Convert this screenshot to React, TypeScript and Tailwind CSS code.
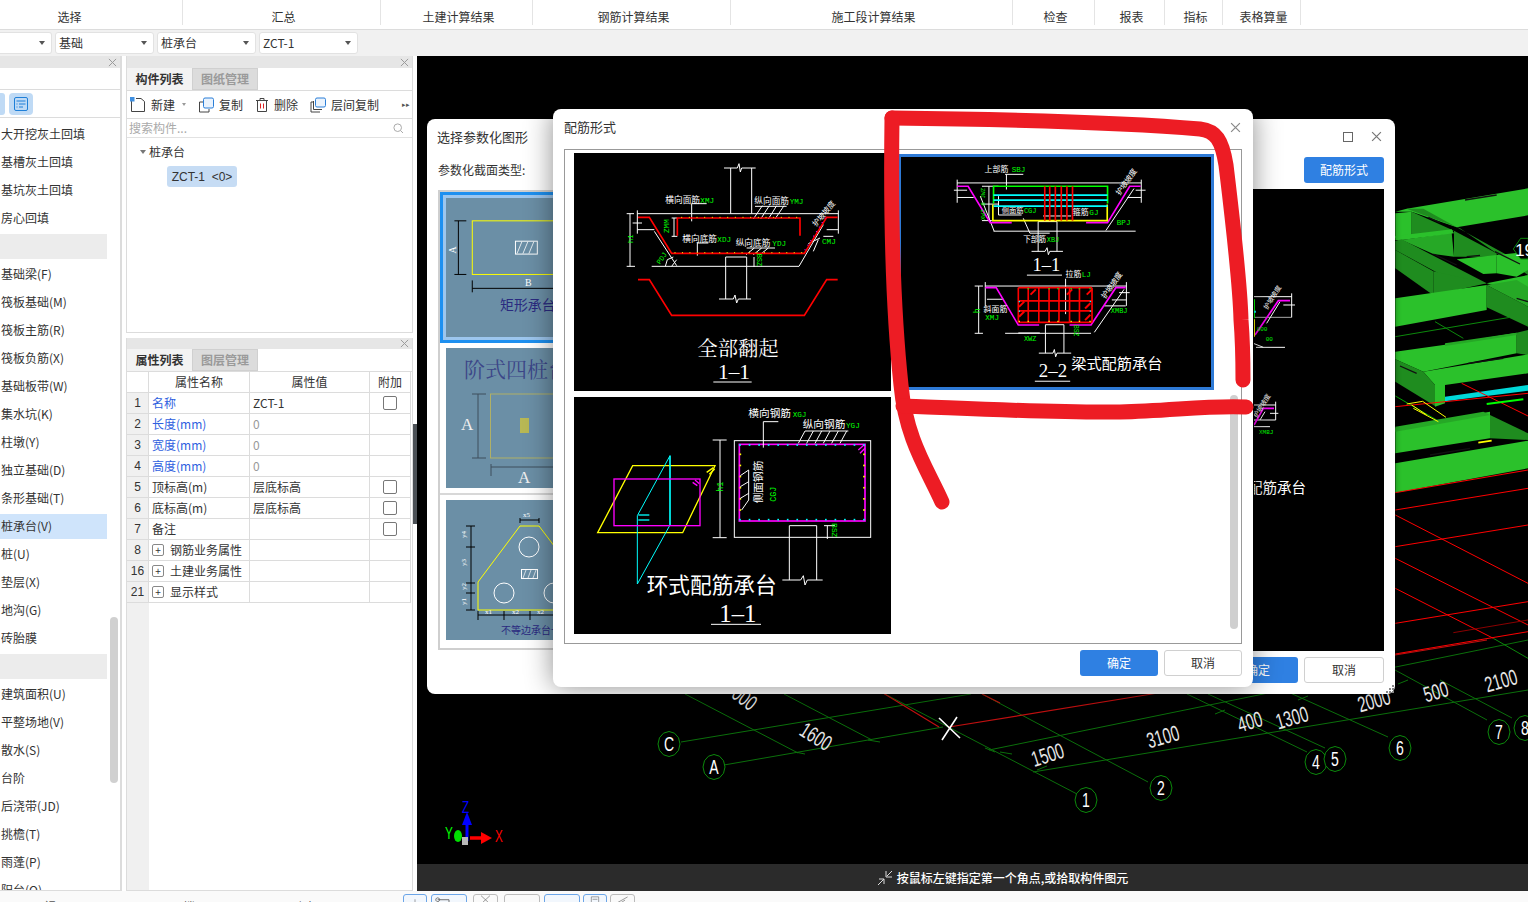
import React from "react";

const W = "#ffffff", R = "#ff0000", G = "#00ff00", M = "#ff00ff", Y = "#ffff00", C = "#00ffff";
const L = ({ p, c = W, w = 3 }: { p: string; c?: string; w?: number }) => <polyline points={p} fill="none" stroke={c} strokeWidth={w} />;
const MONO = "'Liberation Mono', monospace";
const SERIF = "'Liberation Serif','Noto Serif CJK SC','Noto Sans CJK SC',serif";
const T = ({ x, y, s = 26, c = W, r, t, f }: any) => (
  <text x={x} y={y} fontSize={f === MONO ? s + 3 : s} fill={c} fontFamily={f} transform={r !== undefined ? `rotate(${r} ${x} ${y})` : undefined}>{t}</text>
);

const Dots = ({ pts, c = Y, r = 2 }: { pts: number[][]; c?: string; r?: number }) => (
  <g>{pts.map(([x, y], i) => <rect key={i} x={x - r} y={y - r} width={r * 2} height={r * 2} fill={c} />)}</g>
);
const range = (a: number, b: number, n: number) => Array.from({ length: n }, (_, i) => a + ((b - a) * i) / (n - 1));

function Drawing1() {
  return (
    <svg viewBox="42 40 951 714" className="block h-full w-full bg-black">
      <L p="232,222 835,222" />
      <L p="492,85 532,85 537,72 541,97 545,85 587,85" />
      <L p="512,85 512,222" /><L p="575,85 575,222" />
      <L p="232,212 232,282" /><L p="835,212 835,282" />
      <L p="210,222 210,380" /><L p="200,222 222,222" /><L p="200,380 225,380" />
      <L p="218,250 246,250" /><L p="232,270 283,270" /><L p="800,270 835,270" />
      <L p="275,380 717,380" /><L p="283,275 350,378" /><L p="717,380 790,255" />
      <L p="335,380 350,360" /><L p="316,380 322,360 340,352" />
      <L p="497,352 560,352" /><L p="497,352 497,478" /><L p="560,352 560,478" />
      <L p="477,478 520,478 525,466 530,490 535,478 573,478" />
      <L p="395,192 440,192" /><L p="395,192 395,245" />
      <L p="412,310 445,310" /><L p="412,310 412,348" />
      <L p="585,200 680,200" /><L p="607,198 580,238" /><L p="628,198 602,238" /><L p="650,198 625,238" /><L p="672,198 645,238" />
      <L p="560,325 645,325" /><L p="583,325 558,345" /><L p="605,325 580,345" /><L p="625,325 600,345" />
      <L p="745,312 780,295" /><L p="760,335 775,300" /><L p="790,290 820,290" />
      <L p="335,235 352,235" /><L p="335,290 352,290" /><L p="342,235 342,290" />
      <L p="582,352 582,382" />
      <L p="234,233 268,233 335,341 733,341 800,233 833,233" c={R} w={5} />
      <L p="352,288 352,235 720,235 720,288" c={R} w={5} />
      <L p="234,420 268,420 335,527 733,527 800,420 833,420" c={R} w={5} />
      <Dots pts={range(365, 710, 16).map((x) => [x, 233])} r={1.5} />
      <Dots pts={range(345, 725, 18).map((x) => [x, 339])} r={1.5} />
      <Dots pts={range(0, 1, 8).map((t) => [735 + t * 60, 330 - t * 95])} c={M} r={1.5} />
      <T x={316} y={190} t="横向面筋" /><T x={421} y={190} t="XMJ" c={G} f={MONO} s={20} />
      <T x={583} y={192} t="纵向面筋" /><T x={689} y={192} t="YMJ" c={G} f={MONO} s={20} />
      <T x={367} y={306} t="横向底筋" /><T x={472} y={306} t="XDJ" c={G} f={MONO} s={20} />
      <T x={527} y={318} t="纵向底筋" /><T x={637} y={318} t="YDJ" c={G} f={MONO} s={20} />
      <T x={786} y={314} t="CMJ" c={G} f={MONO} s={20} />
      <T x={327} y={280} t="ZMM" c={G} r={-90} f={MONO} s={20} />
      <T x={218} y={310} t="h1" c={G} r={-90} f={MONO} s={18} />
      <T x={300} y={375} t="PDJ" c={G} r={-55} f={MONO} s={18} />
      <T x={590} y={342} t="BSZ" c={G} r={90} f={MONO} s={18} />
      <T x={768} y={262} t="护坡坡度" r={-50} s={23} />
      <T x={412} y={650} t="全部翻起" s={61} f={SERIF} />
      <T x={474} y={718} t="1–1" s={64} f={SERIF} />
      <L p="460,727 575,727" />
    </svg>
  );
}

function Drawing2() {
  return (
    <svg viewBox="30 140 938 695" className="block h-full w-full bg-black">
      <L p="200,218 757,218" /><L p="200,208 200,278" /><L p="757,208 757,278" />
      <L p="190,240 230,240" /><L p="200,262 250,262" /><L p="715,262 757,262" /><L p="740,240 770,240" />
      <L p="310,364 740,364" /><L p="270,258 312,364" /><L p="650,362 735,235" />
      <L p="445,335 502,335" /><L p="445,335 445,425" /><L p="502,335 502,425" />
      <L p="425,425 466,425 472,414 476,435 480,425 520,425" />
      <L p="349,192 349,238" /><L p="345,192 400,192" />
      <L p="325,258 325,315 395,315" /><L p="400,325 420,370" /><L p="420,370 480,370" />
      <L p="296,228 296,332" /><L p="275,228 325,228" /><L p="275,282 325,282" /><L p="275,332 305,332" />
      <L p="460,318 545,318" />
      <L p="200,228 233,228 300,338 365,338" c={M} w={5} />
      <L p="590,338 655,338 722,228 755,228" c={M} w={5} />
      <L p="310,280 310,228 655,228 655,280" c={G} w={5} />
      <L p="308,283 308,332 654,332 654,283" c={Y} w={5} />
      <L p="310,255 655,255" c={C} w={5} /><L p="310,270 655,270" c={C} w={5} /><L p="310,288 655,288" c={C} w={5} />
      {[465, 480, 497, 515, 532, 549].map((x) => <L key={x} p={`${x},228 ${x},332`} c={R} w={5} />)}
      <T x={283} y={184} t="上部筋" s={24} /><T x={365} y={184} t="SBJ" c={G} f={MONO} s={20} />
      <T x={335} y={310} t="侧面筋" s={22} /><T x={402} y={310} t="CGJ" c={G} f={MONO} s={18} />
      <T x={550} y={314} t="箍筋" s={24} /><T x={600} y={314} t="GJ" c={G} f={MONO} s={20} />
      <T x={400} y={396} t="下部筋" s={23} /><T x={471} y={396} t="XBJ" c={G} f={MONO} s={18} />
      <T x={683} y={346} t="BPJ" c={G} f={MONO} s={20} />
      <T x={285} y={330} t="XWZ 8 JWZ" c={G} r={-90} f={MONO} s={15} />
      <T x={692} y={257} t="护坡坡度" r={-55} s={23} />
      <T x={428} y={484} t="1–1" s={56} f={SERIF} />
      <L p="411,497 517,497" />

      <L p="285,530 712,530" /><L p="285,518 285,590" /><L p="712,518 712,590" />
      <L p="265,530 265,673" /><L p="253,530 278,530" /><L p="253,673 278,673" />
      <L p="345,673 605,673" /><L p="290,570 340,570" /><L p="668,572 712,572" /><L p="690,550 722,550" />
      <L p="615,670 705,540" /><L p="645,590 710,590" /><L p="385,672 450,672" />
      <L p="467,647 523,647" /><L p="467,647 467,733" /><L p="523,647 523,733" />
      <L p="447,733 490,733 494,722 498,744 502,733 545,733" />
      <L p="528,508 528,615" />
      <L p="285,535 318,535 385,648 448,648" c={M} w={5} />
      <L p="540,648 605,648 680,535 710,535" c={M} w={5} />
      {[385, 415, 447, 478, 508, 540, 570, 608].map((x) => <L key={x} p={`${x},535 ${x},640`} c={R} w={5} />)}
      {[535, 575, 605, 640].map((y) => <L key={y} p={`385,${y} 608,${y}`} c={R} w={5} />)}
      {[[430, 548], [540, 548], [600, 548], [395, 585], [595, 590], [395, 615], [595, 625]].map(([x, y], i) => (
        <L key={i} p={`${x - 8},${y + 8} ${x + 8},${y - 8}`} c={R} w={6} />
      ))}
      <Dots pts={[415, 478, 505, 545, 570, 602].map((x) => [x, 538])} c={G} r={2} />
      <Dots pts={[388, 415, 478, 505, 545, 570, 602].map((x) => [x, 637])} c={Y} r={2} />
      <Dots pts={[[388, 577], [388, 606], [603, 577], [603, 606]]} c={C} r={2} />
      <T x={528} y={504} t="拉筋" s={24} /><T x={577} y={504} t="LJ" c={G} f={MONO} s={20} />
      <T x={280} y={610} t="斜面筋" s={24} /><T x={285} y={634} t="XMJ" c={G} f={MONO} s={20} />
      <T x={665} y={612} t="XMBJ" c={G} f={MONO} s={18} />
      <T x={402} y={696} t="XWZ" c={G} f={MONO} s={18} />
      <T x={268} y={612} t="h" c={G} r={-90} f={MONO} s={22} />
      <T x={552} y={648} t="BSZ" c={G} r={90} f={MONO} s={16} />
      <T x={648} y={570} t="护坡坡度" r={-55} s={23} />
      <T x={447} y={805} t="2–2" s={57} f={SERIF} />
      <L p="435,818 542,818" />
      <T x={545} y={782} t="梁式配筋承台" s={46} />
    </svg>
  );
}

function Drawing3() {
  return (
    <svg viewBox="42 6 951 711" className="block h-full w-full bg-black">
      <polygon points="218,212 465,212 368,413 113,413" fill="none" stroke={Y} strokeWidth={4} />
      <polygon points="330,182 232,362 232,567 330,390" fill="none" stroke={C} strokeWidth={3} />
      <L p="330,182 330,390" c={C} w={4} /><L p="235,360 268,360" c={C} w={4} /><L p="235,375 268,375" c={C} w={4} />
      <rect x={162} y={252} width={258} height={140} fill="none" stroke={M} strokeWidth={4} />
      <L p="398,262 412,272" c={M} w={4} /><L p="405,255 418,266" c={M} w={4} />
      <L p="440,232 460,218" c={Y} w={4} /><L p="448,238 464,222" c={Y} w={4} />
      <L p="480,135 480,428" /><L p="458,135 500,135" /><L p="458,428 500,428" />
      <rect x={523} y={137} width={409} height={290} fill="none" stroke={W} strokeWidth={3} />
      <rect x={538} y={148} width={377} height={230} fill="none" stroke={M} strokeWidth={5} />
      <L p="895,165 912,150" c={M} w={4} /><L p="900,175 915,160" c={M} w={4} />
      <Dots pts={range(540, 912, 14).map((x) => [x, 150])} c={C} r={2.5} />
      <Dots pts={range(540, 912, 14).map((x) => [x, 374])} c={C} r={2.5} />
      <Dots pts={range(178, 345, 6).map((y) => [541, y])} r={2.5} />
      <Dots pts={range(178, 345, 6).map((y) => [912, y])} r={2.5} />
      <L p="610,158 610,80 655,80" />
      <L p="715,145 735,108 865,108" /><L p="740,145 760,108" /><L p="765,145 785,108" /><L p="790,145 810,108" /><L p="815,145 835,108" /><L p="840,145 860,108" />
      <L p="545,345 566,315 566,225" /><L p="541,242 566,225" /><L p="541,275 566,260" /><L p="541,310 566,295" />
      <L p="688,392 770,392" /><L p="688,392 688,555" /><L p="770,392 770,555" />
      <L p="667,555 722,555 730,542 735,570 742,555 788,555" />
      <L p="792,392 825,392" /><L p="802,392 802,432" />
      <T x={565} y={65} t="横向钢筋" s={32} /><T x={698} y={65} t="XGJ" c={G} f={MONO} s={20} />
      <T x={728} y={98} t="纵向钢筋" s={32} /><T x={858} y={98} t="YGJ" c={G} f={MONO} s={20} />
      <T x={607} y={325} t="侧面钢筋" s={32} r={-90} />
      <T x={648} y={320} t="CGJ" c={G} r={-90} f={MONO} s={22} />
      <T x={490} y={290} t="h1" c={G} r={-90} f={MONO} s={22} />
      <T x={815} y={385} t="BSZ" c={G} r={90} f={MONO} s={20} />
      <T x={260} y={595} t="环式配筋承台" s={65} />
      <T x={478} y={682} t="1–1" s={74} f={SERIF} />
      <L p="453,688 603,688" />
    </svg>
  );
}

const Select = ({ t, w = "w-[99px]", cut }: { t?: string; w?: string; cut?: boolean }) => (
  <div className={`flex h-[22px] ${w} items-center justify-between border border-[#e2e2e2] bg-white pl-[3px] pr-[6px] ${cut ? "rounded-r-[3px] border-l-0" : "rounded-[3px]"}`}>
    <span className="text-[12px] text-[#333]">{t}</span>
    <span className="h-0 w-0 border-x-[3px] border-t-[4px] border-x-transparent border-t-[#555]" />
  </div>
);

const X = ({ c = "#9a9a9a", s = 9 }: { c?: string; s?: number }) => (
  <svg width={s} height={s} viewBox="0 0 10 10"><path d="M1 1 9 9M9 1 1 9" stroke={c} strokeWidth="1.1" /></svg>
);

const list: (string | null)[] = ["大开挖灰土回填", "基槽灰土回填", "基坑灰土回填", "房心回填", null, "基础梁(F)", "筏板基础(M)", "筏板主筋(R)", "筏板负筋(X)", "基础板带(W)", "集水坑(K)", "柱墩(Y)", "独立基础(D)", "条形基础(T)", "桩承台(V)", "桩(U)", "垫层(X)", "地沟(G)", "砖胎膜", null, "建筑面积(U)", "平整场地(V)", "散水(S)", "台阶", "后浇带(JD)", "挑檐(T)", "雨蓬(P)", "阳台(Q)"];

const LeftPanel = () => (
  <div className="flex h-full w-[122px] shrink-0 flex-col overflow-hidden border-r-2 border-b border-[#dcdcdc] bg-white">
    <div className="flex h-[12px] items-center justify-end bg-[#e6e6e6] pr-[3px]"><X /></div>
    <div className="h-[22px] border-b border-[#dcdcdc]" />
    <div className="flex h-[28px] items-center gap-[4px] border-b border-[#dcdcdc]">
      <div className="h-[22px] w-[5px] rounded-r-[3px] bg-[#bfdaf5]" />
      <div className="flex h-[22px] w-[24px] items-center justify-center rounded-[4px] bg-[#bfdaf5]">
        <svg width="16" height="16" viewBox="0 0 16 16" fill="none" stroke="#1e7fd8"><rect x="1.5" y="1.5" width="13" height="13" rx="1.5" /><path d="M3.5 5h9M3.5 8h1M6 8h6.5M3.5 11h1M6 11h4" /></svg>
      </div>
    </div>
    <div className="relative flex-1 overflow-hidden pt-[2px]">
      {list.map((t, i) => (
        <div key={i} className="flex h-[28px] items-center">
          <div className={`flex h-[25px] w-[107px] items-center pl-[1px] text-[12px] text-[#333] ${t === null ? "bg-[#ececec]" : t === "桩承台(V)" ? "bg-[#cfe4fb]" : ""}`}>{t}</div>
        </div>
      ))}
      <div className="absolute left-[110px] top-[499px] h-[166px] w-[8px] rounded-full bg-[#d0d0d0]" />
    </div>
  </div>
);

const Tabs = ({ a, b }: { a: string; b: string }) => (
  <div className="flex h-[23px] border-b border-[#dcdcdc]">
    <div className="flex h-[22px] w-[65px] items-center justify-center bg-[#f3f3f3] text-[12px] font-bold text-[#333]">{a}</div>
    <div className="flex h-[22px] w-[66px] items-center justify-center border border-[#d0d0d0] bg-[#dcdcdc] text-[12px] font-bold text-[#9a9a9a]">{b}</div>
  </div>
);

const IconNew = () => (
  <svg width="16" height="16" viewBox="0 0 16 16" fill="none"><path d="M1.5 4v10.5h13V4.5L11 1.5H6" stroke="#444" /><rect x="0" y="0" width="4.5" height="4.5" fill="#3f8fe0" /></svg>
);
const IconCopy = () => (
  <svg width="16" height="16" viewBox="0 0 16 16" fill="none"><path d="M5 5H1.5v10H11v-3" stroke="#444" /><rect x="5.5" y="1" width="10" height="10" rx="1.5" stroke="#2b7fd8" fill="#eaf3fd" /></svg>
);
const IconDel = () => (
  <svg width="14" height="16" viewBox="0 0 14 16" fill="none"><path d="M1 3.5h12M5 3.5V1.5h4v2M2.5 3.5v11h9v-11" stroke="#444" /><path d="M5.5 6.5v5M8.5 6.5v5" stroke="#d22" /></svg>
);
const IconFloor = () => (
  <svg width="16" height="16" viewBox="0 0 16 16" fill="none"><path d="M3.5 5H1v10h9M3.5 4v8.5H12" stroke="#444" /><rect x="5.5" y="1" width="10" height="9" rx="1.5" stroke="#2b7fd8" fill="#eaf3fd" /></svg>
);

const Tool = ({ i, t, w }: { i: React.ReactNode; t: string; w: string }) => (
  <div className={`flex items-center gap-[5px] ${w}`}>{i}<span className="text-[12px] text-[#333]">{t}</span></div>
);

const rows = [
  ["1", "名称", "ZCT-1", true, true],
  ["2", "长度(mm)", "0", true, false],
  ["3", "宽度(mm)", "0", true, false],
  ["4", "高度(mm)", "0", true, false],
  ["5", "顶标高(m)", "层底标高", false, true],
  ["6", "底标高(m)", "层底标高", false, true],
  ["7", "备注", "", false, true],
] as const;

const MidPanel = () => (
  <div className="flex h-full w-[287px] shrink-0 flex-col gap-[5px]">
    <div className="flex h-[277px] flex-col border-x border-b border-[#dcdcdc] bg-white">
      <div className="flex h-[12px] items-center justify-end bg-[#e6e6e6] pr-[3px]"><X /></div>
      <Tabs a="构件列表" b="图纸管理" />
      <div className="flex h-[28px] items-center border-b border-[#dcdcdc] pl-[3px]">
        <Tool i={<IconNew />} t="新建" w="w-[52px]" />
        <span className="mr-[12px] h-0 w-0 border-x-[2.5px] border-t-[3px] border-x-transparent border-t-[#999]" />
        <Tool i={<IconCopy />} t="复制" w="w-[57px]" />
        <Tool i={<IconDel />} t="删除" w="w-[55px]" />
        <Tool i={<IconFloor />} t="层间复制" w="w-[90px]" />
        <span className="ml-[2px] text-[7px] text-[#555]">▸▸</span>
      </div>
      <div className="flex h-[19px] items-center justify-between border-b border-[#e2e2e2] pl-[2px] pr-[8px]">
        <span className="text-[12px] text-[#aaa]">搜索构件...</span>
        <svg width="11" height="11" viewBox="0 0 11 11" fill="none" stroke="#aaa"><circle cx="4.7" cy="4.7" r="3.8" /><path d="M7.6 7.6 10 10" /></svg>
      </div>
      <div className="pl-[13px] pt-[5px]">
        <div className="flex h-[18px] items-center gap-[3px]">
          <span className="h-0 w-0 border-x-[3px] border-t-[4px] border-x-transparent border-t-[#777]" />
          <span className="text-[12px] text-[#333]">桩承台</span>
        </div>
        <div className="ml-[27px] mt-[5px] flex h-[21px] w-[70px] items-center justify-center rounded-[3px] bg-[#c6dcf4] text-[12px] text-[#333]" style={{ fontFamily: "'Liberation Sans',sans-serif" }}>ZCT-1&nbsp;&nbsp;&lt;0&gt;</div>
      </div>
    </div>
    <div className="flex min-h-0 flex-1 flex-col border-x border-b border-[#dcdcdc] bg-white">
      <div className="flex h-[11px] items-center justify-end bg-[#e6e6e6] pr-[3px]"><X /></div>
      <Tabs a="属性列表" b="图层管理" />
      <div className="relative flex-1">
        <div className="absolute inset-y-0 left-0 w-[22px] bg-[#f0f0f0]" />
        <div className="relative grid w-[284px] grid-cols-[22px_101px_120px_41px] auto-rows-[21px] text-[12px] text-[#333]">
          {["", "属性名称", "属性值", "附加"].map((h, i) => (
            <div key={i} className="flex items-center justify-center border-b border-r border-[#dcdcdc] bg-white">{h}</div>
          ))}
          {rows.map(([n, a, b, blue, chk]) => (
            <React.Fragment key={n}>
              <div className="flex items-center justify-center border-b border-r border-[#dcdcdc] bg-[#f0f0f0]" style={{ fontFamily: "'Liberation Sans',sans-serif" }}>{n}</div>
              <div className={`flex items-center border-b border-r border-[#dcdcdc] bg-white pl-[3px] ${blue ? "text-[#2f5fe0]" : ""}`}>{a}</div>
              <div className={`flex items-center border-b border-r border-[#dcdcdc] bg-white pl-[3px] ${b === "0" ? "text-[#999]" : ""}`}>{b}</div>
              <div className="flex items-center justify-center border-b border-r border-[#dcdcdc] bg-white">
                {chk && <span className="h-[14px] w-[14px] rounded-[2px] border border-[#777] bg-white" />}
              </div>
            </React.Fragment>
          ))}
          {[["8", "钢筋业务属性"], ["16", "土建业务属性"], ["21", "显示样式"]].map(([n, a]) => (
            <React.Fragment key={n}>
              <div className="flex items-center justify-center border-b border-r border-[#dcdcdc] bg-[#f0f0f0]" style={{ fontFamily: "'Liberation Sans',sans-serif" }}>{n}</div>
              <div className="flex items-center gap-[6px] border-b border-r border-[#dcdcdc] bg-white pl-[3px]">
                <span className="flex h-[12px] w-[12px] items-center justify-center rounded-[2px] border border-[#888] text-[10px] leading-none">+</span>
                <span>{a}</span>
              </div>
              <div className="border-b border-r border-[#dcdcdc] bg-white" />
              <div className="border-b border-r border-[#dcdcdc] bg-white" />
            </React.Fragment>
          ))}
        </div>
      </div>
    </div>
  </div>
);

const SANS = "'Liberation Sans',sans-serif";
const squeeze = (x: number, y: number, r = 0) =>
  `rotate(${r} ${x} ${y}) translate(${x} ${y}) scale(0.78 1.15) translate(${-x} ${-y})`;

const Oct = ({ x, y, t }: { x: number; y: number; t: string }) => {
  const rx = 11, ry = 12.5;
  const pts = Array.from({ length: 12 }, (_, i) => {
    const a = (Math.PI * 2 * i) / 12;
    return `${x + rx * Math.cos(a)},${y + ry * Math.sin(a)}`;
  }).join(" ");
  return (
    <g>
      <polygon points={pts} fill="#000" stroke="#0c8a0c" strokeWidth="1" />
      <text x={x} y={y + 7} textAnchor="middle" fontSize="18" fill="#fff" fontFamily={SANS} transform={squeeze(x, y + 7)}>{t}</text>
    </g>
  );
};
const Dim = ({ x, y, r, t }: { x: number; y: number; r: number; t: string }) => (
  <text x={x} y={y} fontSize="19" fill="#e6e6e6" textAnchor="middle" fontFamily={SANS} transform={squeeze(x, y, r)}>{t}</text>
);

const BRIGHT = "#2bc12b", MID = "#26a826", DARK = "#1f8c1f";

const Scene = () => (
  <svg viewBox="417 56 1111 808" className="absolute inset-0 h-full w-full">
    <g stroke="#0b6f0b" strokeWidth="1" fill="none">
      <path d="M681 742 971 694M724 765 943 727M989 750 1528 640M1033 772 1528 690" />
      <path d="M1077 794 883 693M1148 782 982 694M1307 752 1187 694M1325 748 1208 694M1388 737 1268 683M1487 720 1395 670M1512 718 1440 680M798 753 685 694M872 740 784 694" />
    </g>
    <g stroke="#c01010" strokeWidth="1.2" fill="none">
      <path d="M949 727 1158 693M883 693 939 727M982 694 1000 703M1395 655 1487 640" />
    </g>
    <g stroke="#0b6f0b" strokeWidth="1" fill="none">
      <path d="M795 752 805 754M868 740 880 742M1000 752 1012 754M1037 770 1047 766M985 748 995 752M1215 714 1225 710M1298 700 1308 696M1398 684 1408 680" />
    </g>
    <g stroke="#fff" strokeWidth="1.6"><path d="M939 718 960 738M957 717 942 740" /></g>
    <Dim x={740} y={704} r={38} t="000" />
    <Dim x={812} y={743} r={32} t="1600" />
    <Dim x={1050} y={762} r={-18} t="1500" />
    <Dim x={1165} y={744} r={-16} t="3100" />
    <Dim x={1252} y={729} r={-16} t="400" />
    <Dim x={1294} y={725} r={-16} t="1300" />
    <Dim x={1376} y={708} r={-16} t="2000" />
    <Dim x={1438} y={699} r={-16} t="500" />
    <Dim x={1503} y={688} r={-16} t="2100" />
    <Oct x={669} y={744} t="C" /><Oct x={714} y={767} t="A" /><Oct x={1086} y={800} t="1" /><Oct x={1161} y={788} t="2" />
    <Oct x={1316} y={762} t="4" /><Oct x={1335} y={759} t="5" /><Oct x={1400} y={748} t="6" /><Oct x={1499} y={732} t="7" /><Oct x={1525} y={728} t="8" />

    <g fontFamily={SANS} fontSize="15">
      <text x={462} y={813} fill="#0000ff" transform={squeeze(462, 813)}>Z</text>
      <text x={445} y={839} fill="#00ff00" transform={squeeze(445, 839)}>Y</text>
      <text x={495} y={842} fill="#ff0000" transform={squeeze(495, 842)}>X</text>
    </g>
    <path d="M467 841V822" stroke="#0000ff" strokeWidth="3" />
    <polygon points="467,812 462,825 472,825" fill="#0000ff" />
    <path d="M470 838H483" stroke="#ff0000" strokeWidth="3.5" />
    <polygon points="492,838 481,832 481,844" fill="#ff0000" />
    <ellipse cx="458" cy="836" rx="4" ry="6" fill="#00e000" />
    <rect x="462" y="837" width="6" height="8" fill="#b8b8b8" />

    <g transform="translate(1230 110) scale(0.33333)">
      <polygon points="496,305 530,296 894,235 894,316 680,352 545,305" fill={BRIGHT} />
      <polygon points="496,310 545,305 545,375 496,385" fill={BRIGHT} />
      <polygon points="530,296 580,296 894,470 894,495 800,430 690,355" fill={DARK} />
      <polygon points="545,305 672,362 545,375" fill={DARK} />
      <polygon points="515,390 665,368 672,440 610,432" fill={MID} />
      <polygon points="672,362 800,430 800,440 672,440" fill={DARK} />
      <polygon points="680,448 800,435 800,490 760,492" fill={BRIGHT} />
      <polygon points="496,378 665,358 672,370 515,390 496,390" fill={BRIGHT} />
      <polygon points="515,388 770,520 700,530 496,420 496,392" fill={DARK} />
      <polygon points="496,420 610,484 610,556 496,475" fill={DARK} />
      <polygon points="610,484 770,520 610,556" fill={DARK} />
      <polygon points="496,565 770,525 770,600 496,650" fill={BRIGHT} />
      <polygon points="770,525 894,590 894,650 770,592" fill={DARK} />
      <polygon points="800,435 894,425 894,480 860,500 800,490" fill={BRIGHT} />
      <polygon points="770,520 894,495 894,555" fill={BRIGHT} />
      <polygon points="770,525 860,510 894,530 894,590" fill={MID} />
      <polygon points="496,725 640,705 860,668 860,730 580,785 496,748" fill={BRIGHT} />
      <polygon points="645,700 860,668 860,675 645,708" fill={MID} />
      <polygon points="860,668 894,660 894,735 860,730" fill={DARK} />
      <polygon points="580,785 894,733 894,790 645,825 615,825" fill={BRIGHT} />
      <polygon points="496,748 580,785 615,825 615,888 496,815" fill={DARK} />
      <polygon points="615,825 645,825 645,880 615,890" fill={BRIGHT} />
      <polygon points="496,955 780,905 780,985 496,1030" fill={BRIGHT} />
      <polygon points="496,950 760,905 780,915 496,965" fill={MID} />
      <polygon points="780,915 894,970 894,990 780,985" fill={DARK} />
      <polygon points="496,1060 894,992 894,1075 496,1148" fill={BRIGHT} />
      <polygon points="645,860 894,825 894,842 645,874" fill={C} opacity="0.85" />
      <path d="M695 820 894 918M496 890 894 850" stroke={R} strokeWidth="3" fill="none" />
      <path d="M496 680 840 622M615 635 700 685" stroke="#0c8a0c" strokeWidth="3" fill="none" />
      <path d="M496 858 620 930" stroke={G} strokeWidth="2" fill="none" />
      <path d="M530 882 578 874 648 922M545 885 590 915M550 895 625 935" stroke={Y} strokeWidth="3" fill="none" />
      <path d="M770 882 880 868" stroke={G} strokeWidth="6" />
      <path d="M705 270 800 255M595 322 630 338M610 432 680 465M710 440 750 436M795 425 870 462M860 565 894 575M510 768 560 790M715 760 820 745M600 1035 720 1015" stroke="#111" strokeWidth="4" fill="none" />
      <path d="M745 998 785 992" stroke={Y} strokeWidth="5" />
      <polygon points="872,385 895,385 895,447 872,447 850,417" fill="#000" stroke="#0c8a0c" strokeWidth="3" />
      <text x={855} y={438} fontSize="52" fill="#fff" fontFamily={SANS}>19</text>
    </g>
    <g transform="translate(1240 330) scale(0.33333)" stroke={R} strokeWidth="3" fill="none">
      <path d="M466 488 864 420M466 540 864 475M466 650 864 585M466 555 864 760M466 685 864 885M466 775 760 925M466 880 864 815M466 972 864 905" />
      <path d="M640 908 864 870" stroke="#8b0000" />
      <path d="M760 925 864 985" stroke="#0c8a0c" />
    </g>
  </svg>
);

const RearImage = () => (
  <svg viewBox="1254 189 130 462" className="ml-auto block h-full w-[130px]">
    <g transform="translate(1230 110) scale(0.33333)">
      <L p="70,560 185,560" /><L p="185,550 185,622" /><L p="78,712 165,712" /><L p="110,640 150,575" />
      <L p="70,622 185,622" w={2} /><L p="70,700 100,712" />
      <L p="75,675 145,572 180,572" c={M} w={5} />
      <L p="72,568 72,625" c={G} w={6} /><L p="72,628 72,680" c={Y} w={6} />
      <L p="72,605 78,605" c={C} w={6} />
      <text x={112} y={600} fontSize="20" fill={W} transform="rotate(-58 112 600)">护坡坡度</text>
      <text x={107} y={692} fontSize="18" fill={G} fontFamily={MONO}>00</text>
      <text x={80} y={662} fontSize="18" fill={G} fontFamily={MONO}>000</text>
      <L p="160,585 195,585" />
    </g>
    <g transform="translate(1240 330) scale(0.33333)">
      <L p="40,225 107,225" /><L p="107,215 107,270" /><L p="42,270 107,270" /><L p="42,290 90,290" />
      <L p="42,285 70,235 102,235" c={M} w={5} />
      <L p="60,270 75,245" /><L p="90,250 115,250" />
      <text x={50} y={265} fontSize="20" fill={W} transform="rotate(-58 50 265)">护坡坡度</text>
      <text x={57} y={311} fontSize="18" fill={G} fontFamily={MONO}>XMBJ</text>
    </g>
    <text x={1248} y={493} fontSize="14.5" fill="#fff">配筋承台</text>
  </svg>
);

const Thumb1 = () => (
  <svg viewBox="446 196 130 140" className="block h-full w-full">
    <rect x="472" y="219" width="110" height="54" fill="none" stroke={Y} strokeWidth="1" />
    <rect x="515.5" y="239.5" width="22" height="13" fill="none" stroke="#fff" />
    <path d="M517 252 522 240M523 252 528 240M529 252 534 240" stroke="#fff" strokeWidth="0.8" />
    <path d="M454 219H466M454 273H466M458 219V273M472 279V291M472 287H570" stroke="#000" strokeWidth="1" fill="none" />
    <text x="456" y="252" fontSize="10" fill="#fff" fontFamily={SERIF} transform="rotate(-90 456 252)">A</text>
    <text x="525" y="285" fontSize="10" fill="#fff" fontFamily={SERIF}>B</text>
    <text x="500" y="309" fontSize="14" fill="#2a2a80" fontFamily="'Noto Sans CJK SC',sans-serif">矩形承台</text>
  </svg>
);
const Thumb2 = () => (
  <svg viewBox="446 349 130 140" className="block h-full w-full">
    <text x="464" y="378" fontSize="21" fill="#3c4688" fontFamily={SERIF}>阶式四桩台</text>
    <rect x="490.5" y="395" width="90" height="64" fill="none" stroke="#b0b066" />
    <rect x="520" y="419" width="9" height="15" fill="#b8b855" />
    <path d="M478 395V459M472 395H486M472 459H486M491 465V477M491 468H570" stroke="#3f4f5c" fill="none" />
    <text x="461" y="431" fontSize="17" fill="#f0f0f0" fontFamily={SERIF}>A</text>
    <text x="518" y="484" fontSize="17" fill="#f0f0f0" fontFamily={SERIF}>A</text>
  </svg>
);
const Thumb3 = () => (
  <svg viewBox="446 502 130 140" className="block h-full w-full">
    <polyline points="578,612 478,612 478,584 520,528 539,528 558,553" fill="none" stroke={Y} />
    <circle cx="529" cy="549" r="10" fill="none" stroke="#fff" />
    <circle cx="504" cy="595" r="10" fill="none" stroke="#fff" />
    <circle cx="554" cy="595" r="10" fill="none" stroke="#fff" />
    <rect x="521.5" y="571.5" width="16" height="9" fill="none" stroke="#fff" />
    <path d="M523 580 526 572M528 580 531 572M533 580 536 572" stroke="#fff" strokeWidth="0.7" />
    <path d="M520 525V520M520 522H539M539 525V520M471 528V612M466 528H475M466 549H475M466 585H475M466 595H475M466 612H475M478 617H570M478 613V622M504 613V622M530 613V622M555 613V622" stroke="#000" fill="none" />
    <g fontSize="7" fill="#fff" fontFamily={SERIF}>
      <text x="523" y="519">x5</text><text x="485" y="616">x1</text><text x="512" y="616">x2</text><text x="537" y="616">x2</text>
      <text x="466" y="540" transform="rotate(-90 466 540)">y4</text>
      <text x="466" y="568" transform="rotate(-90 466 568)">y3</text>
      <text x="466" y="592" transform="rotate(-90 466 592)">y2</text>
      <text x="466" y="607" transform="rotate(-90 466 607)">y1</text>
    </g>
    <text x="501" y="636" fontSize="10" fill="#2a2a80" fontFamily="'Noto Sans CJK SC',sans-serif">不等边承台一</text>
  </svg>
);

const RearDialog = () => (
  <div className="absolute left-[10px] top-[63px] flex h-[575px] w-[968px] flex-col rounded-lg bg-white shadow-[0_0_6px_rgba(0,0,0,0.4)]">
    <div className="flex h-[38px] shrink-0 items-start justify-between pl-[10px] pr-[13px] pt-[8px]">
      <span className="text-[13px] text-[#333]">选择参数化图形</span>
      <div className="mt-[4px] flex items-center gap-[18px]">
        <span className="h-[10px] w-[10px] border border-[#666]" />
        <X c="#777" s={11} />
      </div>
    </div>
    <div className="flex min-h-0 flex-1 justify-between px-[11px]">
      <div className="w-[400px]">
        <div className="mt-[3px] h-[20px] text-[12px] leading-[20px] text-[#333]">参数化截面类型:</div>
        <div className="mt-[10px] flex h-[460px] flex-col border-2 border-[#cfcfcf]">
          <div className="flex h-[151px] border-[3px] border-[#1e90f0] bg-[#9cc6ee] p-[3px]"><div className="h-full w-[130px] bg-[#6b8fa6]"><Thumb1 /></div></div>
          <div className="flex h-[152px] items-center border-b-2 border-[#d8d8d8] pl-[6px]"><div className="h-[140px] w-[130px] bg-[#6b8fa6]"><Thumb2 /></div></div>
          <div className="flex h-[150px] items-center pl-[6px]"><div className="h-[140px] w-[130px] bg-[#6b8fa6]"><Thumb3 /></div></div>
        </div>
      </div>
      <div className="flex w-[484px] flex-col">
        <div className="flex justify-end"><button className="h-[26px] w-[80px] rounded-[3px] bg-[#2f80e2] text-[12px] text-white">配筋形式</button></div>
        <div className="mt-[6px] h-[462px] bg-black"><RearImage /></div>
        <div className="mt-[6px] flex justify-end gap-[6px]">
          <button className="h-[26px] w-[80px] rounded-[3px] bg-[#2f80e2] text-[12px] text-white">确定</button>
          <button className="h-[26px] w-[80px] rounded-[3px] border border-[#d0d0d0] bg-white text-[12px] text-[#333]">取消</button>
        </div>
      </div>
    </div>
    <svg className="absolute bottom-[1px] right-[1px]" width="9" height="9" viewBox="0 0 9 9" fill="#888"><rect x="7" y="1" width="2" height="2" /><rect x="4" y="4" width="2" height="2" /><rect x="7" y="4" width="2" height="2" /><rect x="1" y="7" width="2" height="2" /><rect x="4" y="7" width="2" height="2" /><rect x="7" y="7" width="2" height="2" /></svg>
  </div>
);

const FrontDialog = () => (
  <div className="absolute left-[136px] top-[53px] flex h-[578px] w-[700px] flex-col rounded-lg bg-white px-[11px] shadow-[0_0_28px_rgba(0,0,0,0.45)]">
    <div className="flex h-[40px] shrink-0 items-start justify-between pr-[1px] pt-[8px]">
      <span className="text-[13px] leading-[20px] text-[#333]">配筋形式</span>
      <span className="mt-[5px]"><X c="#888" s={11} /></span>
    </div>
    <div className="relative h-[495px] shrink-0 border border-[#999] pl-[9px] pt-[3px]">
      <div className="grid grid-cols-[317px_316px] grid-rows-[238px_237px] gap-x-[7px] gap-y-[6px]">
        <Drawing1 />
        <div className="mt-[1px] h-[236px] border-[3px] border-[#2e7ad6]"><Drawing2 /></div>
        <Drawing3 />
      </div>
      <div className="absolute right-[3px] top-[245px] h-[234px] w-[8px] rounded-full bg-[#cfcfcf]" />
    </div>
    <div className="mt-[6px] flex justify-end gap-[6px]">
      <button className="h-[26px] w-[78px] rounded-[3px] bg-[#2f80e2] text-[12px] text-white">确定</button>
      <button className="h-[26px] w-[78px] rounded-[3px] border border-[#d0d0d0] bg-white text-[12px] text-[#333]">取消</button>
    </div>
  </div>
);

const Scribble = () => (
  <svg className="pointer-events-none absolute left-[460px] top-[50px]" width="400" height="470" viewBox="877 106 400 470">
    <g fill="none" stroke="#ed1c24" strokeWidth="15" strokeLinecap="round" strokeLinejoin="round">
      <path d="M892 118C980 119 1120 122 1200 129C1216 131 1222 140 1226 165C1232 215 1240 280 1241 320C1243 345 1243 360 1243 380" />
      <path d="M892 118C891 190 892 300 901 385C906 440 928 470 942 502" />
      <path d="M903 406C960 408 1050 413 1120 412C1170 411 1210 405 1246 407" />
    </g>
  </svg>
);

const tabs = [
  ["选择", "w-[183px] pr-[43px]"], ["汇总", "w-[198px] pl-[4px]"], ["土建计算结果", "w-[152px] pl-[4px]"], ["钢筋计算结果", "w-[198px] pl-[4px]"],
  ["施工段计算结果", "w-[282px] pl-[4px]"], ["检查", "w-[82px] pl-[4px]"], ["报表", "w-[70px] pl-[4px]"], ["指标", "w-[58px] pl-[4px]"], ["表格算量", "w-[78px] pl-[4px]"],
];
const TopBar = () => (
  <div className="flex h-[30px] shrink-0 border-b border-[#dcdcdc] bg-white">
    {tabs.map(([t, w]) => (
      <div key={t} className={`${w} h-[25px] border-r border-[#e4e4e4] pt-[9px] text-center text-[12px] leading-[16px] text-[#333]`}>{t}</div>
    ))}
  </div>
);

const Btn = ({ w, on, d, mr }: { w: string; on?: boolean; d: string; mr: string }) => (
  <span className={`${w} ${mr} h-[12px] overflow-hidden rounded-t-[3px] border ${on ? "border-[#6ba5e8] bg-[#f2f7fd]" : "border-[#bbb]"}`}>
    <svg width="100%" height="14" viewBox="0 0 36 14" preserveAspectRatio="xMidYMin meet" fill="none" stroke="#666"><path d={d} /></svg>
  </span>
);

const BottomBar = () => (
  <div className="h-[11px] shrink-0 overflow-hidden bg-[#fafafa] text-[12px] text-[#555]">
    <div className="flex h-full items-start">
      <span className="ml-[44px] mt-[8px] w-[139px] leading-[16px]">视图</span>
      <span className="mt-[8px] w-[109px] leading-[16px]">楼层显示</span>
      <span className="mt-[8px] w-[111px] leading-[16px]">动态显示</span>
      <div className="mt-[3px] flex">
        <Btn w="w-[24px]" on mr="mr-[4px]" d="M18 7v7" />
        <Btn w="w-[36px]" on mr="mr-[6px]" d="M6 5h12v8M6 3a2 2 0 1 0 .1 0" />
        <Btn w="w-[25px]" mr="mr-[6px]" d="M11 1 25 14M25 1 11 14" />
        <Btn w="w-[36px]" mr="mr-[4px]" d="M18 8 15 14" />
        <Btn w="w-[36px]" on mr="mr-[3px]" d="M18 8v6" />
        <Btn w="w-[24px]" on mr="mr-[3px]" d="M12 3h12v10H12zM14 7h8" />
        <Btn w="w-[25px]" mr="" d="M10 12 26 3M14 13l8-5" />
      </div>
    </div>
  </div>
);

export default function App() {
  return (
    <div className="flex h-[902px] w-[1528px] flex-col overflow-hidden bg-white font-['Noto_Sans_CJK_SC',sans-serif]">
      <TopBar />
      <div className="flex h-[26px] shrink-0 items-center gap-[3px] bg-[#f1f1f1]">
        <Select w="w-[52px]" cut />
        <Select t="基础" />
        <Select t="桩承台" />
        <Select t="ZCT-1" />
      </div>
      <div className="flex min-h-0 flex-1">
        <LeftPanel />
        <div className="w-[4px] shrink-0 bg-white" />
        <MidPanel />
        <div className="flex w-[4px] shrink-0 items-center bg-white"><div className="h-[100px] w-full bg-[#4c5156]" /></div>
        <div className="flex min-w-0 flex-1 flex-col">
          <div className="relative min-h-0 flex-1 overflow-hidden bg-black">
            <Scene />
            <RearDialog />
            <FrontDialog />
            <Scribble />
          </div>
          <div className="flex h-[27px] shrink-0 items-center justify-center gap-[4px] bg-[#2b2b2b] pl-[60px] text-[12px] font-medium text-white">
            <svg width="16" height="16" viewBox="0 0 16 16" fill="none" stroke="#ddd"><path d="M1 15 7 9M2 9h5v5M15 1 10 6M9 1v6h6" /></svg>
            <span>按鼠标左键指定第一个角点,或拾取构件图元</span>
          </div>
        </div>
      </div>
      <BottomBar />
    </div>
  );
}
